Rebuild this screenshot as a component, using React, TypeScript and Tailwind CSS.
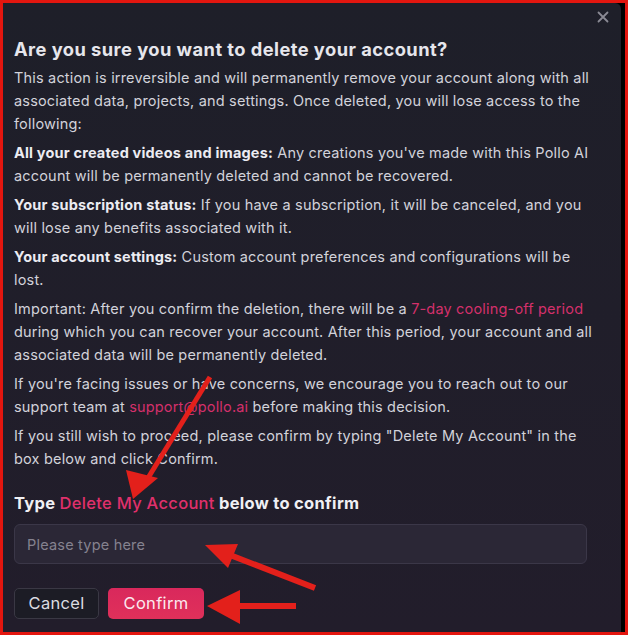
import React from "react";

export default function App() {
  const strong = "font-bold text-[#ececf2]";
  const pink = "text-[#d4306b]";
  return (
    <div
      className="relative w-[628px] h-[635px] bg-[#e3160f] pt-[3px] pl-[3px] pr-[3px] pb-[3px] overflow-hidden"
      style={{ fontFamily: "Inter, 'Noto Sans', sans-serif" }}
    >
      <div className="w-full h-full bg-black">
        <div className="relative w-[618px] h-[629px] rounded-tr-[6px] bg-gradient-to-b from-[#1e1f29] to-[#221d2b] pl-[11px] pr-[20px] pt-[32px]">
          <button className="absolute right-[12px] top-[8px] text-[#8a8a94]">
            <svg width="12" height="12" viewBox="0 0 12 12" fill="none">
              <path d="M1.5 1.5L10.5 10.5M10.5 1.5L1.5 10.5" stroke="currentColor" strokeWidth="1.8" strokeLinecap="round" />
            </svg>
          </button>
          <h2 className="text-[18.3px] leading-[28px] tracking-[0.45px] font-bold text-[#e6e6ec] whitespace-nowrap">
            Are you sure you want to delete your account?
          </h2>
          <div className="mt-[3px] text-[14.5px] leading-[23px] tracking-[0.18px] text-[#d2d2da] flex flex-col gap-[6px] whitespace-nowrap">
            <p>
              This action is irreversible and will permanently remove your account along with all
              <br />
              associated data, projects, and settings. Once deleted, you will lose access to the
              <br />
              following:
            </p>
            <p>
              <span className={strong}>All your created videos and images:</span> Any creations you've made with this Pollo AI
              <br />
              account will be permanently deleted and cannot be recovered.
            </p>
            <p>
              <span className={strong}>Your subscription status:</span> If you have a subscription, it will be canceled, and you
              <br />
              will lose any benefits associated with it.
            </p>
            <p>
              <span className={strong}>Your account settings:</span> Custom account preferences and configurations will be
              <br />
              lost.
            </p>
            <p>
              Important: After you confirm the deletion, there will be a <span className={pink}>7-day cooling-off period</span>
              <br />
              during which you can recover your account. After this period, your account and all
              <br />
              associated data will be permanently deleted.
            </p>
            <p>
              If you're facing issues or have concerns, we encourage you to reach out to our
              <br />
              support team at <span className={pink}>support@pollo.ai</span> before making this decision.
            </p>
            <p>
              If you still wish to proceed, please confirm by typing "Delete My Account" in the
              <br />
              box below and click Confirm.
            </p>
          </div>
          <div className="mt-[21px] text-[16.5px] leading-[24px] tracking-[0.3px] font-bold text-[#f0f0f4] whitespace-nowrap">
            Type <span className="font-medium text-[#e0306c]">Delete My Account</span> below to confirm
          </div>
          <input
            placeholder="Please type here"
            className="mt-[9px] w-[573px] h-[40px] rounded-[6px] border border-[#3b3748] bg-[#2b2736] px-[12px] text-[14.5px] tracking-[0.2px] text-[#d2d2da] placeholder:text-[#85828f] outline-none"
          />
          <div className="mt-[24px] flex gap-[9px]">
            <button className="h-[31px] w-[85px] rounded-[5px] border border-[#3a3844] bg-[#1c1c25] text-[16.5px] tracking-[0.3px] text-[#dcdce2]">
              Cancel
            </button>
            <button className="h-[31px] w-[96px] rounded-[5px] bg-gradient-to-b from-[#d9285c] to-[#e0305a] text-[16.5px] tracking-[0.3px] text-[#fbe9ef]">
              Confirm
            </button>
          </div>
        </div>
      </div>
      <svg className="absolute left-0 top-0 pointer-events-none" width="628" height="635" viewBox="0 0 628 635">
        <g fill="#e3201b" stroke="#e3201b">
          <line x1="210" y1="377" x2="148" y2="478" strokeWidth="5" />
          <polygon points="133,499 126,470 158,478" stroke="none" />
          <line x1="315" y1="588" x2="230" y2="555" strokeWidth="6" />
          <polygon points="205,545 238,544 228,568" stroke="none" />
          <line x1="296" y1="606" x2="232" y2="606" strokeWidth="6" />
          <polygon points="207,606 240,590 240,624" stroke="none" />
        </g>
      </svg>
    </div>
  );
}
